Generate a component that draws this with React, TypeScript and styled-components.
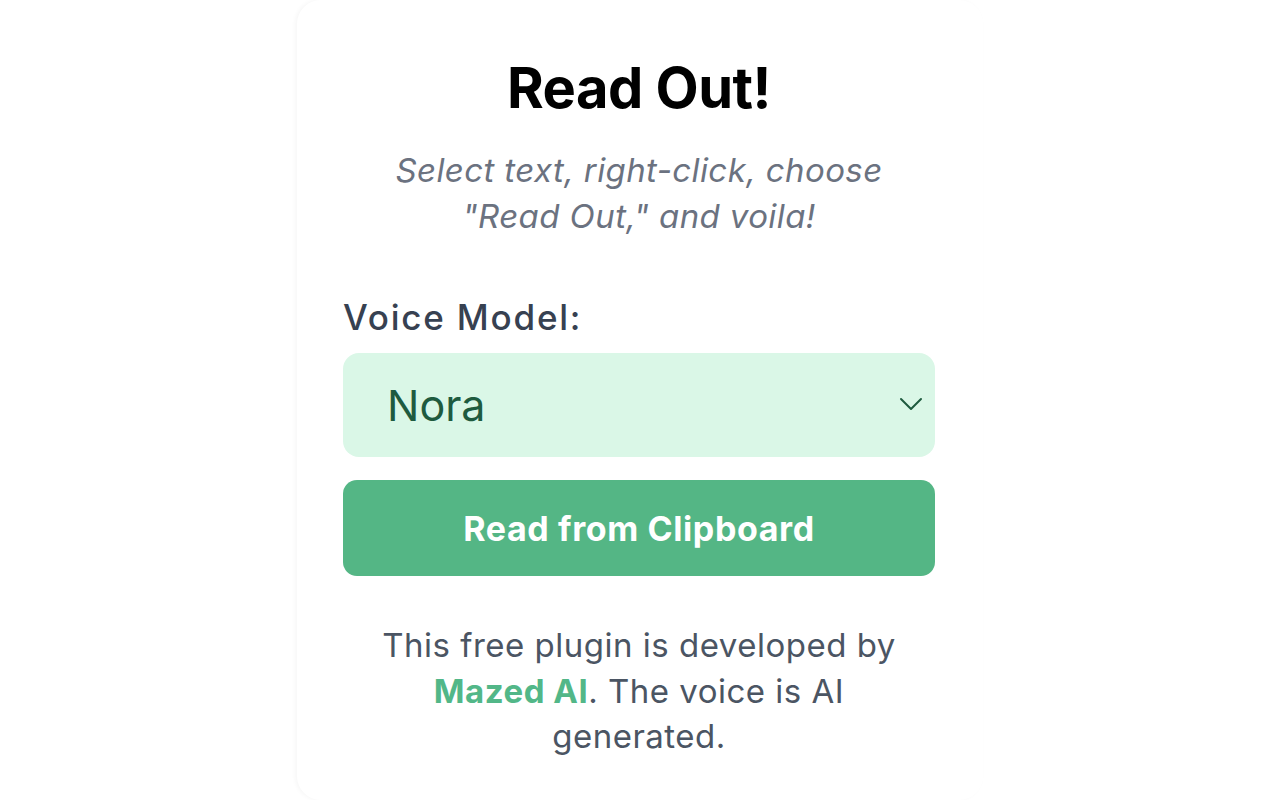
import React from "react";
import styled, { createGlobalStyle } from "styled-components";

const Global = createGlobalStyle`
  html, body { margin: 0; padding: 0; background: #ffffff; }
  body { font-family: Inter, "Noto Sans", sans-serif; }
  * { box-sizing: border-box; }
`;

const Page = styled.div`
  width: 1280px;
  height: 800px;
  display: flex;
  justify-content: center;
  overflow: hidden;
  background: #ffffff;
`;

const Card = styled.div`
  width: 686px;
  height: 800px;
  background: #ffffff;
  border-radius: 24px;
  box-shadow: -2px 0 4px rgba(0, 0, 0, 0.035);
  padding: 52px 48px 0 46px;
  display: flex;
  flex-direction: column;
`;

const Title = styled.h1`
  margin: 0;
  font-size: 56px;
  line-height: 72px;
  font-weight: 700;
  color: #000000;
  text-align: center;
  letter-spacing: -0.5px;
`;

const Subtitle = styled.p`
  margin: 23px 0 0;
  font-size: 33px;
  line-height: 46px;
  font-style: italic;
  color: #6b7280;
  text-align: center;
  letter-spacing: 0.4px;
`;

const Label = styled.label`
  margin-top: 54px;
  font-size: 35px;
  line-height: 48px;
  font-weight: 500;
  color: #374151;
  letter-spacing: 1.8px;
`;

const SelectBox = styled.div`
  margin-top: 12px;
  height: 104px;
  border-radius: 16px;
  background: #daf7e7;
  display: flex;
  align-items: center;
  justify-content: space-between;
  padding: 0 12px 0 44px;
  color: #1e5b3f;
  font-size: 43px;
`;

const Chevron = styled.svg`
  width: 24px;
  height: 14px;
  margin-bottom: 2px;
`;

const Button = styled.button`
  margin-top: 23px;
  height: 96px;
  border: none;
  border-radius: 14px;
  background: #54b685;
  color: #ffffff;
  font-family: Inter, "Noto Sans", sans-serif;
  font-size: 34px;
  font-weight: 700;
  letter-spacing: 0.6px;
`;

const Footer = styled.p`
  margin: 47px 0 0;
  font-size: 33px;
  line-height: 45.5px;
  color: #4b5563;
  text-align: center;
  letter-spacing: 0.5px;
`;

const Link = styled.span`
  color: #52b788;
  font-weight: 700;
`;

export default function App() {
  return (
    <>
      <Global />
      <Page>
        <Card>
          <Title>Read Out!</Title>
          <Subtitle>
            Select text, right-click, choose
            <br />
            "Read Out," and voila!
          </Subtitle>
          <Label>Voice Model:</Label>
          <SelectBox>
            <span>Nora</span>
            <Chevron viewBox="0 0 24 14" fill="none" stroke="#1e5b3f" strokeWidth="2" strokeLinecap="round" strokeLinejoin="round">
              <polyline points="2,2 12,12 22,2" />
            </Chevron>
          </SelectBox>
          <Button>Read from Clipboard</Button>
          <Footer>
            This free plugin is developed by
            <br />
            <Link>Mazed AI</Link>. The voice is AI
            <br />
            generated.
          </Footer>
        </Card>
      </Page>
    </>
  );
}
